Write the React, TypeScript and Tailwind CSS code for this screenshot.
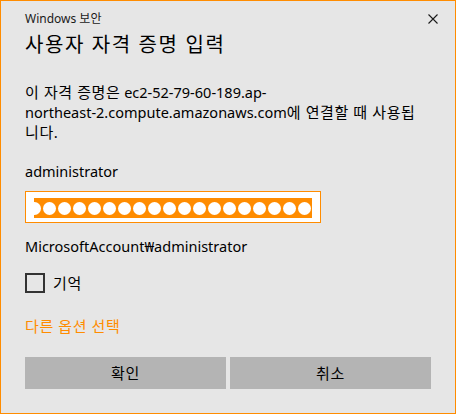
const font = {
  fontFamily: '"Noto Sans", "Noto Sans CJK KR", sans-serif',
};

// Hangul runs are set a little wider, like Malgun Gothic
const K = ({ children }: { children: React.ReactNode }) => (
  <span className="text-[15px] tracking-[0.6px]">{children}</span>
);

const PasswordField = () => {
  const dots = [...Array(19)];
  return (
    <div className="mt-[10px] h-[32px] w-[296px] border border-[#ff8c00] bg-white pl-[8px] pt-[6px]">
      <div className="flex h-[20px] w-[278px] items-center justify-end gap-[2px] overflow-hidden bg-[#ff8c00] pr-[1px]">
        {dots.map((_, i) => (
          <span
            key={i}
            className="block h-[13px] w-[13px] shrink-0 rounded-full bg-white"
          />
        ))}
      </div>
    </div>
  );
};

export default function App() {
  return (
    <div className="min-h-[416px] w-[458px] bg-white" style={font}>
      <div className="flex h-[414px] w-[456px] flex-col border border-[#ff8c00] bg-[#e6e6e6] pl-[24px] pr-[23px] pt-[10px] text-[14.5px] text-black">
        {/* title bar */}
        <div className="flex h-[16px] items-center justify-between">
          <span className="text-[12px] leading-[16px] text-[#1a1a1a]">
            Windows 보안
          </span>
          <svg
            viewBox="0 0 10 10"
            className="mr-[-6px] h-[10px] w-[10px]"
            stroke="#1a1a1a"
            strokeWidth="1.1"
          >
            <path d="M0.5 0.5 L9.5 9.5 M9.5 0.5 L0.5 9.5" />
          </svg>
        </div>

        <h1 className="mt-[4px] text-[20px] leading-[28px] font-normal tracking-[1.6px]">
          사용자 자격 증명 입력
        </h1>

        <p className="mt-[23px] whitespace-nowrap leading-[20px]">
          <K>이 자격 증명은</K> ec2-52-79-60-189.ap-
          <br />
          northeast-2.compute.amazonaws.com<K>에 연결할 때 사용됩</K>
          <br />
          <K>니다.</K>
        </p>

        <div className="mt-[19px] leading-[20px]">administrator</div>

        <PasswordField />

        <div className="mt-[13px] leading-[20px]">
          MicrosoftAccount₩administrator
        </div>

        {/* remember me */}
        <label className="mt-[17px] flex items-center gap-[8px]">
          <span className="block h-[20px] w-[20px] border-2 border-[#333333]" />
          <span className="leading-[20px]">
            <K>기억</K>
          </span>
        </label>

        <div className="mt-[23px] leading-[20px] text-[#ff8c00]">
          <K>다른 옵션 선택</K>
        </div>

        <div className="mt-[21px] flex gap-[4px]">
          <button className="h-[32px] w-[201px] bg-[#b4b4b4]">
            <K>확인</K>
          </button>
          <button className="h-[32px] w-[201px] bg-[#b4b4b4]">
            <K>취소</K>
          </button>
        </div>
      </div>
    </div>
  );
}
